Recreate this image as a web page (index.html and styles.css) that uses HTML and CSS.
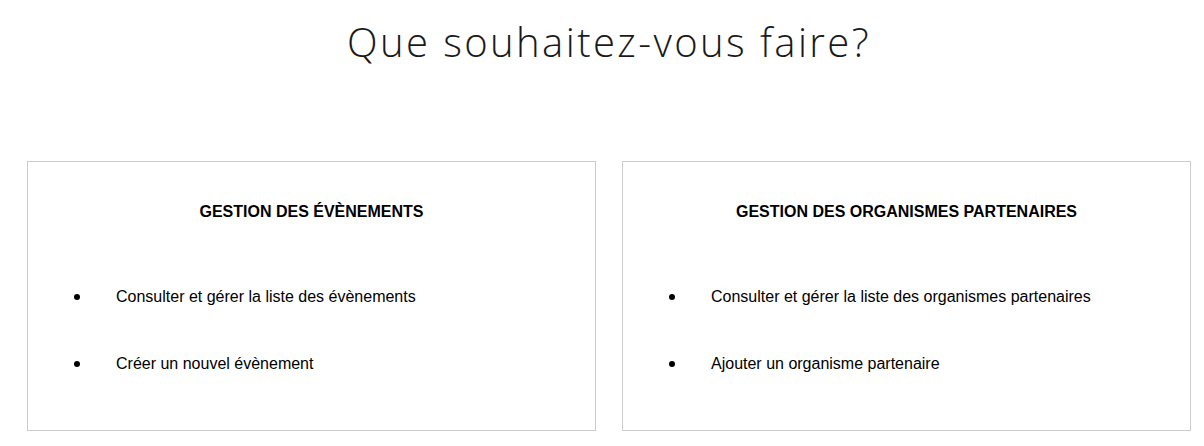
FILE: index.html
```html
<!DOCTYPE html>
<html lang="fr">
<head>
<meta charset="utf-8">
<title>Accueil</title>
<link rel="stylesheet" href="styles.css">
</head>
<body>
<h1 class="title">Que souhaitez-vous faire?</h1>
<div class="cards">
  <section class="card">
    <h2 class="card-title">GESTION DES ÉVÈNEMENTS</h2>
    <ul class="actions">
      <li class="action"><span class="dot"></span><span>Consulter et gérer la liste des évènements</span></li>
      <li class="action"><span class="dot"></span><span>Créer un nouvel évènement</span></li>
    </ul>
  </section>
  <section class="card">
    <h2 class="card-title">GESTION DES ORGANISMES PARTENAIRES</h2>
    <ul class="actions">
      <li class="action"><span class="dot"></span><span>Consulter et gérer la liste des organismes partenaires</span></li>
      <li class="action"><span class="dot"></span><span>Ajouter un organisme partenaire</span></li>
    </ul>
  </section>
</div>
</body>
</html>
```
FILE: styles.css
```css
html, body {
  margin: 0;
  padding: 0;
  background: #fff;
}
body {
  font-family: "Liberation Sans", Arial, sans-serif;
  color: #000;
}
.title {
  margin: 14px 0 0;
  padding-left: 14px;
  font-family: "Open Sans", sans-serif;
  font-weight: 300;
  font-size: 40px;
  line-height: 56px;
  letter-spacing: 2.4px;
  text-align: center;
  color: #1a1a1a;
}
.cards {
  display: grid;
  grid-template-columns: 569px 569px;
  gap: 26px;
  padding: 0 13px 0 27px;
  margin-top: 91px;
}
.card {
  box-sizing: border-box;
  height: 270px;
  border: 1px solid #cccccc;
  padding-top: 41px;
}
.card-title {
  margin: 0;
  font-size: 16px;
  font-weight: bold;
  line-height: 18px;
  text-align: center;
}
.actions {
  list-style: none;
  margin: 67px 0 0;
  padding: 0 0 0 46px;
  display: flex;
  flex-direction: column;
  gap: 49px;
}
.action {
  display: flex;
  align-items: center;
  gap: 36px;
  font-size: 16px;
  line-height: 18px;
}
.dot {
  width: 6px;
  height: 6px;
  border-radius: 50%;
  background: #000;
  flex: none;
}
```
